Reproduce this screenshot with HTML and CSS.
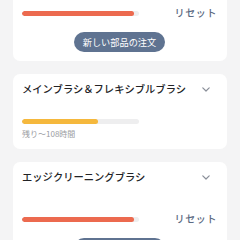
FILE: index.html
```html
<!DOCTYPE html>
<html lang="ja">
<head>
<meta charset="utf-8">
<link rel="stylesheet" href="styles.css">
</head>
<body>
<div class="page">
  <section class="card card-top">
    <div class="row row-first">
      <div class="track"><div class="fill red" style="width:112px"></div></div>
      <span class="reset">リセット</span>
    </div>
    <div class="btn-wrap"><button class="order">新しい部品の注文</button></div>
  </section>

  <section class="card">
    <div class="card-head">
      <span class="title">メインブラシ＆フレキシブルブラシ</span>
      <svg class="chev" width="8" height="5" viewBox="0 0 8 5"><path d="M0.8 0.8 L4 4 L7.2 0.8" fill="none" stroke="#8a8f99" stroke-width="1.2" stroke-linecap="round" stroke-linejoin="round"/></svg>
    </div>
    <div class="body">
      <div class="track"><div class="fill yellow" style="width:76px"></div></div>
      <div class="remain">残り～108時間</div>
    </div>
  </section>

  <section class="card">
    <div class="card-head">
      <span class="title">エッジクリーニングブラシ</span>
      <svg class="chev" width="8" height="5" viewBox="0 0 8 5"><path d="M0.8 0.8 L4 4 L7.2 0.8" fill="none" stroke="#8a8f99" stroke-width="1.2" stroke-linecap="round" stroke-linejoin="round"/></svg>
    </div>
    <div class="row">
      <div class="track"><div class="fill red" style="width:112px"></div></div>
      <span class="reset">リセット</span>
    </div>
    <div class="btn-wrap"><button class="order">新しい部品の注文</button></div>
  </section>
</div>
</body>
</html>
```
FILE: styles.css
```css
html, body {
  margin: 0;
  padding: 0;
  background: #f4f4f5;
  font-family: "Noto Sans CJK JP", "Noto Sans", sans-serif;
  overflow: hidden;
}
.page {
  margin-top: -10px;
  padding: 0 13px;
  display: flex;
  flex-direction: column;
  gap: 13px;
}
.card {
  background: #ffffff;
  border-radius: 7px;
  padding: 8px 10px 9px 9px;
}
.card-top {
  padding-top: 13px;
}
.card-head {
  height: 14px;
  display: flex;
  align-items: center;
  justify-content: space-between;
}
.title {
  font-size: 10.3px;
  font-weight: 500;
  color: #222326;
  line-height: 14px;
  white-space: nowrap;
}
.chev {
  display: block;
  margin-right: 7px;
}
.row {
  margin-top: 25px;
  height: 20px;
  display: flex;
  align-items: center;
  justify-content: space-between;
}
.row-first {
  margin-top: 0;
}
.track {
  width: 117px;
  height: 5px;
  border-radius: 3px;
  background: #eeeeef;
  overflow: hidden;
}
.fill {
  height: 100%;
  border-radius: 3px;
}
.red { background: #ec6a4f; }
.yellow { background: #f5b83d; }
.reset {
  font-size: 10px;
  font-weight: 500;
  letter-spacing: 0.6px;
  color: #5b6a82;
  line-height: 14px;
}
.btn-wrap {
  margin-top: 9px;
  display: flex;
  justify-content: center;
}
.order {
  height: 20px;
  padding: 0 9px;
  border: none;
  border-radius: 10px;
  background: #5f7391;
  color: #ffffff;
  font-family: inherit;
  font-size: 9.2px;
  line-height: 20px;
}
.body {
  margin-top: 23px;
  padding-bottom: 1px;
}
.remain {
  margin-top: 5px;
  font-size: 8px;
  line-height: 10px;
  color: #9a9ca2;
}
```
